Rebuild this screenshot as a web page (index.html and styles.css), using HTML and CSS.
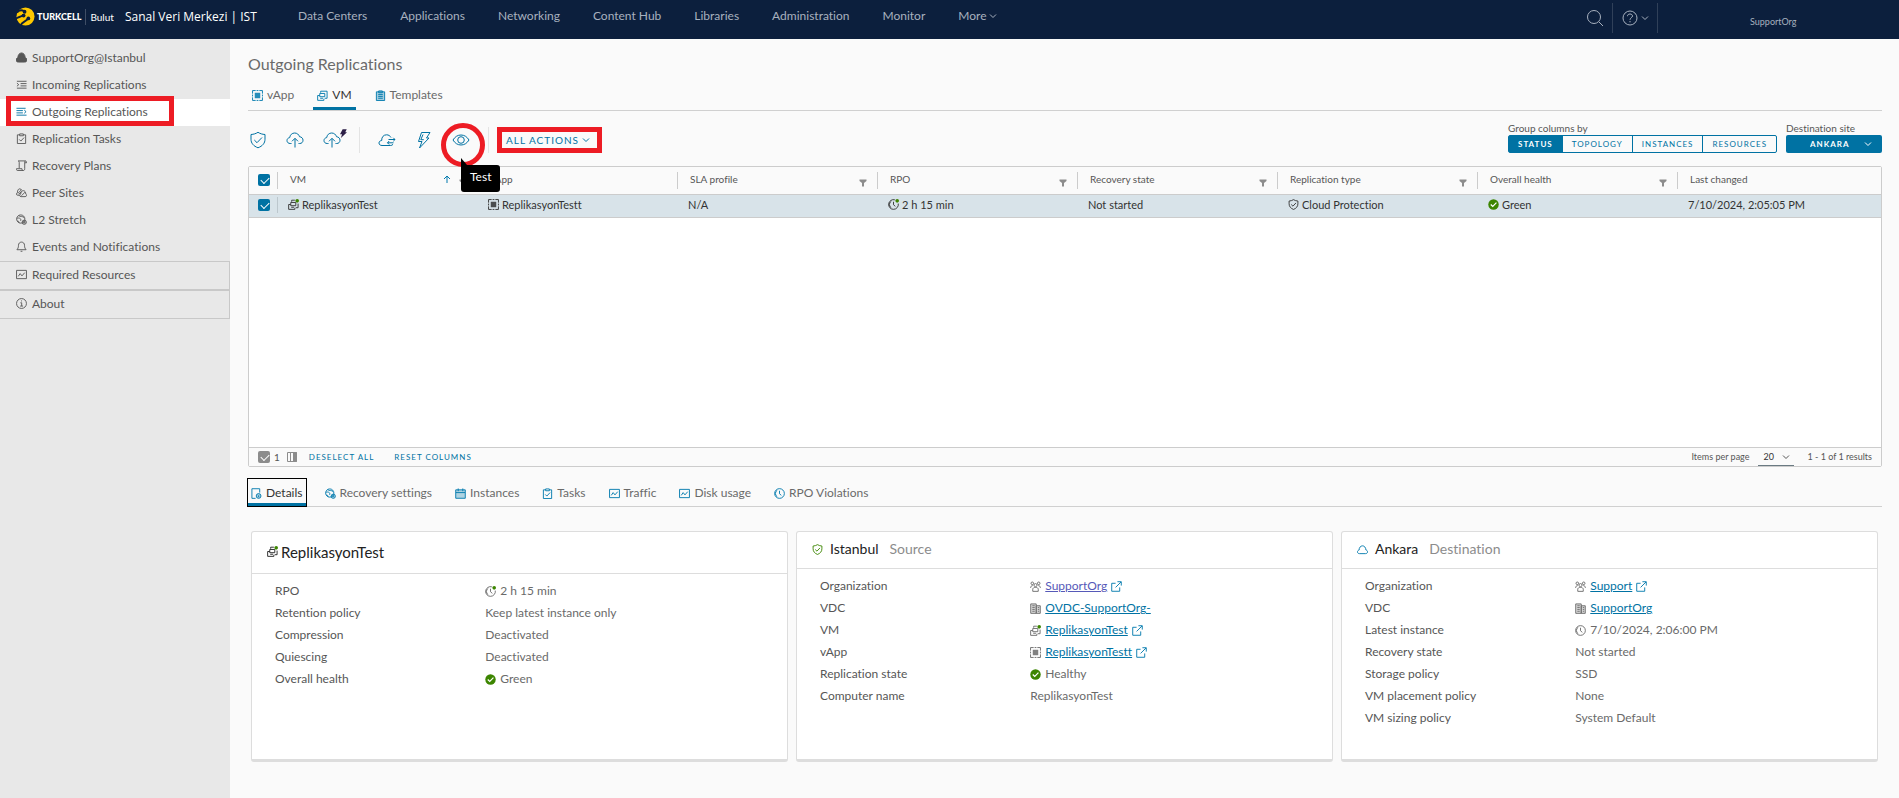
FILE: index.html
```html
<!DOCTYPE html>
<html lang="en">

<head>
    <meta charset="UTF-8">
    <meta name="viewport" content="width=device-width, initial-scale=1.0">
    <title>Outgoing Replications</title>
    <link rel="stylesheet" href="styles.css">
</head>

<body>
    <!-- Icon set, used below with <use> -->
    <svg class="icon-set" aria-hidden="true">
        <symbol id="i-cloud-solid" viewBox="0 0 12 12"><path d="M2.6 11C1 11 0 10 0 8.700c0-1.300.8-2 2-2.400C2 3.500 3.500 1 6 1s4 2.400 4 5.200c1.300.4 2 1.300 2 2.500C12 10 11 11 9.400 11z" fill="currentColor" /></symbol>
        <symbol id="i-cloud" viewBox="0 0 12 12"><path d="M2.800 10.500C1.400 10.500.5 9.800.5 8.600c0-1 .7-1.700 1.800-2C2.300 4 3.800 2 6 2s3.500 1.900 3.700 4.500c1.100.3 1.800 1 1.800 2.100 0 1.200-.9 1.900-2.300 1.900z" /></symbol>
        <symbol id="i-incoming" viewBox="0 0 12 12"><path d="M1 2.500h10.500M5 5h6.500M5 7.500h6.500M1 10h10.500M1 4.500l2 1.700-2 1.700" /></symbol>
        <symbol id="i-outgoing" viewBox="0 0 12 12"><path d="M.5 2.500h10M.5 5h7M.5 7.500h7M.5 10h11M9 4.500l2 1.700-2 1.700" /></symbol>
        <symbol id="i-tasks" viewBox="0 0 12 12"><path d="M4 2H1.500v9.500h9V2H8M4 1h4v2H4zM3.500 7l1.800 1.800L8.800 5" /></symbol>
        <symbol id="i-clip" viewBox="0 0 12 12"><path d="M1.500 2h9v9.500h-9z" fill="currentColor" fill-opacity=".35" /><path d="M4 1h4v2H4zM3.500 5h5M3.500 7h5M3.500 9h5" /></symbol>
        <symbol id="i-plan" viewBox="0 0 12 12"><path d="M3.500 9V2.500C3.500 1.500 3 1 2.500 1h7.700c.9 0 1.300.7 1.300 2h-2v6.500c0 1.300-.6 2-1.500 2H1.500c-.7 0-1-.8-1-2h6c0 1.300.5 2 1.500 2M9.500 3c0-1.300.3-2 .7-2" /></symbol>
        <symbol id="i-peers" viewBox="0 0 12 12"><path d="M5.500 10.500c-1 0-1.500-.6-1.500-1.400 0-.7.4-1.200 1.100-1.400C5.300 5.600 6.300 4 8 4s2.600 1.600 2.700 3.700c.5.2.8.7.8 1.400 0 .8-.6 1.400-1.500 1.400zM4 9H1.800C1 9 .5 8.400.5 7.600c0-.7.4-1.100 1-1.300C1.700 3.500 2.500 2 4 2c1 0 1.800.6 2.200 1.600M2 7l4-4M3 8l3-3M6 9.500l4-4" /></symbol>
        <symbol id="i-globe" viewBox="0 0 12 12"><circle cx="5.200" cy="5.500" r="4.500" /><path d="M1 4.500c3-.5 5 .5 4 3M3 1.800C5 3.500 7 2 9 4M1.500 7.500c1 0 2 1 2 2" /><circle cx="9" cy="9" r="2.300" fill="currentColor" fill-opacity=".3" /><circle cx="9" cy="9" r=".6" /></symbol>
        <symbol id="i-bell" viewBox="0 0 12 12"><path d="M6 1.200c2 0 3.300 1.500 3.300 3.500 0 2.500.6 3.500 1.700 4.800H1c1.100-1.300 1.700-2.300 1.700-4.800 0-2 1.300-3.500 3.300-3.500zM5 11.200h2" /></symbol>
        <symbol id="i-chart" viewBox="0 0 12 12"><path d="M.6 1.500h10.800v9H.6zM2.500 8l2-3 2 2.500L9.500 4" /></symbol>
        <symbol id="i-info" viewBox="0 0 12 12"><circle cx="6" cy="6" r="5.400" /><path d="M4.800 5.200h1.400v3.500M4.500 8.800h3.200M5.500 3.200h1" /></symbol>
        <symbol id="i-vapp" viewBox="0 0 12 12"><path d="M4 .6H.6V4M8 .6h3.400V4M4 11.400H.6V8M8 11.400h3.400V8" /><path d="M3 3h6v6H3z" fill="currentColor" stroke="none" opacity=".85" /><path d="M5 .6h2M5 11.400h2M.6 5v2M11.400 5v2" /></symbol>
        <symbol id="i-vm" viewBox="0 0 12 12"><path d="M4 3V1.300h7V9H8.500M3 3.800h5.500v3.500H3zM.7 6v5.300h6.800V9.500M.7 6H3M3.500 9h3" /></symbol>
        <symbol id="i-vm-on" viewBox="0 0 12 12"><path d="M4 3V1.300h3.500M11 5v4.500H8.500M3 3.800h5.500v3.500H3zM.7 6v5.300h6.800V9.500M.7 6H3M3.500 9h3" /><circle cx="10" cy="2" r="2" fill="#3c8500" stroke="none" /></symbol>
        <symbol id="i-clock" viewBox="0 0 12 12"><circle cx="6" cy="6" r="5.300" /><path d="M3.600 2.500a4 4 0 0 0 0 7M6 3v3.300l2 1.700" /></symbol>
        <symbol id="i-clock-on" viewBox="0 0 12 12"><path d="M7.500.9A5.300 5.300 0 1 0 11.200 5M3.600 2.500a4 4 0 0 0 0 7M6 3v3.300l2 1.700" /><circle cx="10" cy="2" r="2" fill="#3c8500" stroke="none" /></symbol>
        <symbol id="i-shield" viewBox="0 0 12 12"><path d="M6 .7c1.600 1 3 1.400 4.800 1.500v3c0 3-1.800 5-4.800 6.200C3 10.200 1.200 8.200 1.200 5.200v-3C3 2.100 4.400 1.700 6 .7zM3.500 6l1.900 1.800L8.700 4.300" /></symbol>
        <symbol id="i-ok" viewBox="0 0 12 12"><circle cx="6" cy="6" r="5.700" fill="#3c8500" stroke="none" /><path d="M3 6l2.200 2.200L9.200 4" stroke="#fff" stroke-width="1.300" /></symbol>
        <symbol id="i-org" viewBox="0 0 12 12"><circle cx="6" cy="4.500" r="1.700" /><circle cx="2.500" cy="2.500" r="1.400" /><circle cx="9.500" cy="2.500" r="1.400" /><path d="M3 11.300V9c0-1.300 1.300-2 3-2s3 .7 3 2v2.300zM.7 7.500c0-1.500.6-2.300 2.300-2.500M11.300 7.500c0-1.500-.6-2.300-2.300-2.500" /></symbol>
        <symbol id="i-building" viewBox="0 0 12 12"><path d="M.8 1h6v10.300h-6zM6.800 3h4.400v8.300H6.800z" fill="currentColor" fill-opacity=".25" /><path d="M2.500 3h2.700M2.500 5h2.700M2.500 7h2.700M2.500 9h2.700M8.500 5h1.500M8.500 7h1.500M8.500 9h1.500" /></symbol>
        <symbol id="i-popout" viewBox="0 0 12 12"><path d="M5 2.500H.8v8.700h8.700V7M7 .8h4.200V5M11 1L5 7" /></symbol>
        <symbol id="i-details" viewBox="0 0 12 12"><path d="M5 11.300H1V.8h8.500V5" /><circle cx="8.300" cy="8.700" r="2.600" fill="currentColor" fill-opacity=".35" /><path d="M8.300 8v2" /></symbol>
        <symbol id="i-calendar" viewBox="0 0 12 12"><path d="M.8 2h10.400v9.200H.8z" fill="currentColor" fill-opacity=".3" /><path d="M3.500.5v3M8.500.5v3M1 5h10" /></symbol>
        <symbol id="i-filter" viewBox="0 0 8 8"><path d="M.5.500h7v1.500L5 4v3.500H3V4L.5 2z" fill="currentColor" stroke="none" /></symbol>
        <symbol id="i-chevron" viewBox="0 0 8 8"><path d="M1 2.500l3 3 3-3" /></symbol>
        <symbol id="i-arrow-up" viewBox="0 0 8 8"><path d="M4 8V1M1 4l3-3 3 3" /></symbol>
        <symbol id="i-columns" viewBox="0 0 10 10"><path d="M.5.500h9v9h-9zM3.500.500v9" /><path d="M6.500.500h3v9h-3z" fill="currentColor" /></symbol>
        <symbol id="i-shield-large" viewBox="0 0 18 18"><path d="M9 1.300c2.200 1.400 4.300 2 7 2.200v4.700c0 4-2.400 6.800-7 8.600-4.600-1.800-7-4.600-7-8.600V3.500c2.700-.2 4.800-.8 7-2.200zM5.300 9l2.700 2.700 5-5.200" /></symbol>
        <symbol id="i-up-cloud" viewBox="0 0 18 18"><path d="M5.500 12.500H4.200C2.300 12.500 1 11.300 1 9.600c0-1.600 1-2.700 2.700-3C4 3.900 6 2 8.700 2c2.300 0 4.200 1.500 4.800 3.700 2 .2 3.500 1.500 3.500 3.500 0 2-1.300 3.300-3.300 3.300h-1.200" /><path d="M9 16.500V7.500M6 10.300l3-3 3 3" /></symbol>
        <symbol id="i-move-cloud" viewBox="0 0 18 18"><path d="M15 13.300c-.6.900-1.500 1.200-2.700 1.200H4C2.200 14.500 1 13.500 1 12c0-1.400 1-2.300 2.700-2.500-.2-3.300 1.800-5.700 4.800-5.700 2.200 0 3.600 1.100 4.500 2.700" /><path d="M10.500 8.500h6.500M15.300 6.800L17 8.500l-1.700 1.700M15.500 11.800H9.500M11.200 10L9.500 11.800l1.700 1.700" /></symbol>
        <symbol id="i-bolt" viewBox="0 0 18 18"><path d="M6.500 1.500h8.500L11.500 7H14L4.500 17 7 10.500H3.500z" /><path d="M8 3.500L5.800 8.700h3" /></symbol>
        <symbol id="i-bolt-solid" viewBox="0 0 8 10"><path d="M3 0h4.700L6 3.500h2L1 10l1.300-4.200H0z" fill="#2d1f47" stroke="none" /></symbol>
        <symbol id="i-eye" viewBox="0 0 18 18"><path d="M1 9c2-3.300 4.700-5 8-5s6 1.700 8 5c-2 3.300-4.700 5-8 5s-6-1.700-8-5z" /><circle cx="9" cy="9" r="3.300" /></symbol>
        <symbol id="i-search" viewBox="0 0 18 18"><circle cx="8" cy="8" r="6.500" /><path d="M12.800 12.800L17 17" /></symbol>
        <symbol id="i-help" viewBox="0 0 18 18"><circle cx="9" cy="9" r="7" /><path d="M6.500 7.200C6.500 5.700 7.500 5 9 5s2.500.8 2.500 2c0 1.700-2.500 1.800-2.500 3.800M9 12v1.300" /></symbol>
    </svg>

    <header class="header">
        <a class="brand" href="#">
            <svg class="brand-logo" viewBox="0 0 20 20" aria-hidden="true">
                <circle cx="10" cy="10" r="9.500" fill="#ffc900" />
                <path d="M-1 13C2 10 5 11 8 8M1 6c2-3 5-3 8-1.500M5 19c2-4 5-3 8-7" fill="none" stroke="#0c1f3d" stroke-width="2" />
                <circle cx="9" cy="5" r="2" fill="#0c1f3d" />
                <circle cx="8" cy="9" r="2" fill="#0c1f3d" />
                <circle cx="13" cy="12" r="2" fill="#0c1f3d" />
            </svg>
            <span class="brand-name">TURKCELL</span>
            <span class="brand-sub">Bulut</span>
            <span class="brand-title">Sanal Veri Merkezi | IST</span>
        </a>
        <nav class="header-nav">
            <a href="#">Data Centers</a>
            <a href="#">Applications</a>
            <a href="#">Networking</a>
            <a href="#">Content Hub</a>
            <a href="#">Libraries</a>
            <a href="#">Administration</a>
            <a href="#">Monitor</a>
            <a href="#">More<svg class="icon-chevron"><use href="#i-chevron" /></svg></a>
        </nav>
        <div class="header-actions">
            <button class="header-button" aria-label="Search"><svg class="icon-large"><use href="#i-search" /></svg></button>
            <button class="header-button" aria-label="Help"><svg class="icon-large"><use href="#i-help" /></svg><svg class="icon-chevron"><use href="#i-chevron" /></svg></button>
            <div class="header-user">SupportOrg</div>
        </div>
    </header>

    <div class="layout">
        <nav class="sidebar">
            <a href="#"><svg class="icon"><use href="#i-cloud-solid" /></svg>SupportOrg@Istanbul</a>
            <a href="#"><svg class="icon"><use href="#i-incoming" /></svg>Incoming Replications</a>
            <a href="#" class="active"><svg class="icon"><use href="#i-outgoing" /></svg>Outgoing Replications<span class="mark mark-side"></span></a>
            <a href="#"><svg class="icon"><use href="#i-tasks" /></svg>Replication Tasks</a>
            <a href="#"><svg class="icon"><use href="#i-plan" /></svg>Recovery Plans</a>
            <a href="#"><svg class="icon"><use href="#i-peers" /></svg>Peer Sites</a>
            <a href="#"><svg class="icon"><use href="#i-globe" /></svg>L2 Stretch</a>
            <a href="#"><svg class="icon"><use href="#i-bell" /></svg>Events and Notifications</a>
            <a href="#" class="boxed"><svg class="icon"><use href="#i-chart" /></svg>Required Resources</a>
            <a href="#" class="boxed"><svg class="icon"><use href="#i-info" /></svg>About</a>
        </nav>

        <main class="content">
            <h1>Outgoing Replications</h1>

            <div class="tabs">
                <button class="tab"><svg class="icon"><use href="#i-vapp" /></svg>vApp</button>
                <button class="tab active"><svg class="icon"><use href="#i-vm" /></svg>VM</button>
                <button class="tab"><svg class="icon"><use href="#i-clip" /></svg>Templates</button>
            </div>

            <div class="toolbar">
                <div class="toolbar-group">
                    <button class="tool" aria-label="Protect"><svg class="icon-large"><use href="#i-shield-large" /></svg></button>
                    <button class="tool" aria-label="Migrate"><svg class="icon-large"><use href="#i-up-cloud" /></svg></button>
                    <button class="tool" aria-label="Fast migrate"><svg class="icon-large"><use href="#i-up-cloud" /></svg><svg class="icon-badge"><use href="#i-bolt-solid" /></svg></button>
                </div>
                <div class="toolbar-group">
                    <button class="tool" aria-label="Failover settings"><svg class="icon-large"><use href="#i-move-cloud" /></svg></button>
                    <button class="tool" aria-label="Failover"><svg class="icon-large"><use href="#i-bolt" /></svg></button>
                    <button class="tool" aria-label="Test"><svg class="icon-large"><use href="#i-eye" /></svg><span class="mark mark-circle"></span><span class="tooltip">Test</span></button>
                </div>
                <button class="all-actions">ALL ACTIONS<svg class="icon-chevron"><use href="#i-chevron" /></svg></button>
                <div class="toolbar-right">
                    <div class="field">
                        <span class="field-label" id="group-label">Group columns by</span>
                        <div class="button-group" role="group" aria-labelledby="group-label">
                            <button class="active">STATUS</button>
                            <button>TOPOLOGY</button>
                            <button>INSTANCES</button>
                            <button>RESOURCES</button>
                        </div>
                    </div>
                    <div class="field">
                        <label class="field-label" for="site">Destination site</label>
                        <div class="site-select">
                            <select id="site"><option>ANKARA</option></select>
                            <svg class="icon-chevron"><use href="#i-chevron" /></svg>
                        </div>
                    </div>
                </div>
            </div>

            <div class="datagrid">
                <div class="datagrid-body">
                    <table>
                        <colgroup>
                            <col class="col-check">
                            <col class="col-data" span="7">
                            <col>
                        </colgroup>
                        <thead>
                            <tr>
                                <th><input type="checkbox" aria-label="Select all" checked></th>
                                <th><div class="cell">VM<svg class="icon-small sort"><use href="#i-arrow-up" /></svg><svg class="icon-small filter"><use href="#i-filter" /></svg></div></th>
                                <th><div class="cell">vApp</div></th>
                                <th><div class="cell">SLA profile<svg class="icon-small filter"><use href="#i-filter" /></svg></div></th>
                                <th><div class="cell">RPO<svg class="icon-small filter"><use href="#i-filter" /></svg></div></th>
                                <th><div class="cell">Recovery state<svg class="icon-small filter"><use href="#i-filter" /></svg></div></th>
                                <th><div class="cell">Replication type<svg class="icon-small filter"><use href="#i-filter" /></svg></div></th>
                                <th><div class="cell">Overall health<svg class="icon-small filter"><use href="#i-filter" /></svg></div></th>
                                <th><div class="cell">Last changed</div></th>
                            </tr>
                        </thead>
                        <tbody>
                            <tr>
                                <td><input type="checkbox" aria-label="Select ReplikasyonTest" checked></td>
                                <td class="first"><div class="value"><svg class="icon"><use href="#i-vm-on" /></svg>ReplikasyonTest</div></td>
                                <td><div class="value"><svg class="icon"><use href="#i-vapp" /></svg>ReplikasyonTestt</div></td>
                                <td>N/A</td>
                                <td><div class="value"><svg class="icon"><use href="#i-clock-on" /></svg>2 h 15 min</div></td>
                                <td>Not started</td>
                                <td><div class="value"><svg class="icon"><use href="#i-shield" /></svg>Cloud Protection</div></td>
                                <td><div class="value"><svg class="icon"><use href="#i-ok" /></svg>Green</div></td>
                                <td>7/10/2024, 2:05:05 PM</td>
                            </tr>
                        </tbody>
                    </table>
                </div>
                <div class="datagrid-footer">
                    <label class="selected-count"><input type="checkbox" checked disabled>1</label>
                    <button class="icon-button" aria-label="Columns"><svg class="icon-columns"><use href="#i-columns" /></svg></button>
                    <button class="link-button">DESELECT ALL</button>
                    <button class="link-button">RESET COLUMNS</button>
                    <div class="pagination">
                        <label for="page-size">Items per page</label>
                        <div class="page-size">
                            <select id="page-size"><option>20</option></select>
                            <svg class="icon-chevron"><use href="#i-chevron" /></svg>
                        </div>
                        <span>1 - 1 of 1 results</span>
                    </div>
                </div>
            </div>

            <div class="tabs detail-tabs">
                <button class="tab active focused"><svg class="icon"><use href="#i-details" /></svg>Details</button>
                <button class="tab"><svg class="icon"><use href="#i-globe" /></svg>Recovery settings</button>
                <button class="tab"><svg class="icon"><use href="#i-calendar" /></svg>Instances</button>
                <button class="tab"><svg class="icon"><use href="#i-tasks" /></svg>Tasks</button>
                <button class="tab"><svg class="icon"><use href="#i-chart" /></svg>Traffic</button>
                <button class="tab"><svg class="icon"><use href="#i-chart" /></svg>Disk usage</button>
                <button class="tab"><svg class="icon"><use href="#i-clock" /></svg>RPO Violations</button>
            </div>

            <div class="cards">
                <section class="card">
                    <h2 class="card-name"><svg class="icon"><use href="#i-vm-on" /></svg>ReplikasyonTest</h2>
                    <dl>
                        <dt>RPO</dt><dd><svg class="icon"><use href="#i-clock-on" /></svg>2 h 15 min</dd>
                        <dt>Retention policy</dt><dd>Keep latest instance only</dd>
                        <dt>Compression</dt><dd>Deactivated</dd>
                        <dt>Quiescing</dt><dd>Deactivated</dd>
                        <dt>Overall health</dt><dd><svg class="icon"><use href="#i-ok" /></svg>Green</dd>
                    </dl>
                </section>
                <section class="card">
                    <h2 class="card-site"><svg class="icon green"><use href="#i-shield" /></svg>Istanbul <small>Source</small></h2>
                    <dl>
                        <dt>Organization</dt><dd><svg class="icon"><use href="#i-org" /></svg><a class="visited" href="#">SupportOrg</a><svg class="icon popout"><use href="#i-popout" /></svg></dd>
                        <dt>VDC</dt><dd><svg class="icon"><use href="#i-building" /></svg><a href="#">OVDC-SupportOrg-</a></dd>
                        <dt>VM</dt><dd><svg class="icon"><use href="#i-vm-on" /></svg><a href="#">ReplikasyonTest</a><svg class="icon popout"><use href="#i-popout" /></svg></dd>
                        <dt>vApp</dt><dd><svg class="icon"><use href="#i-vapp" /></svg><a href="#">ReplikasyonTestt</a><svg class="icon popout"><use href="#i-popout" /></svg></dd>
                        <dt>Replication state</dt><dd><svg class="icon"><use href="#i-ok" /></svg>Healthy</dd>
                        <dt>Computer name</dt><dd>ReplikasyonTest</dd>
                    </dl>
                </section>
                <section class="card">
                    <h2 class="card-site"><svg class="icon blue"><use href="#i-cloud" /></svg>Ankara <small>Destination</small></h2>
                    <dl>
                        <dt>Organization</dt><dd><svg class="icon"><use href="#i-org" /></svg><a href="#">Support</a><svg class="icon popout"><use href="#i-popout" /></svg></dd>
                        <dt>VDC</dt><dd><svg class="icon"><use href="#i-building" /></svg><a href="#">SupportOrg</a></dd>
                        <dt>Latest instance</dt><dd><svg class="icon"><use href="#i-clock" /></svg>7/10/2024, 2:06:00 PM</dd>
                        <dt>Recovery state</dt><dd>Not started</dd>
                        <dt>Storage policy</dt><dd>SSD</dd>
                        <dt>VM placement policy</dt><dd>None</dd>
                        <dt>VM sizing policy</dt><dd>System Default</dd>
                    </dl>
                </section>
            </div>
        </main>
    </div>
</body>

</html>
```

FILE: styles.css
```css
* {
    box-sizing: border-box;
}

body {
    margin: 0;
    min-height: 100vh;
    display: flex;
    flex-direction: column;
    font-family: Lato, "Open Sans", sans-serif;
    font-size: 12px;
    line-height: 16px;
    font-variant-ligatures: none;
    color: #565656;
    background-color: #fafafa;
}

h1, h2, dl, dd {
    margin: 0;
    font-weight: normal;
}

a {
    color: #0072a3;
}

button, select {
    font: inherit;
    color: inherit;
    background: none;
    border: none;
    padding: 0;
    cursor: pointer;
}

select {
    appearance: none;
}

/* Icons */
svg {
    flex: none;
    fill: none;
    stroke: currentColor;
    stroke-width: 1;
}

.icon-set {
    position: absolute;
    width: 0;
    height: 0;
}

.icon {
    width: 11px;
    height: 11px;
}

.icon-large {
    width: 18px;
    height: 18px;
}

.icon-small, .icon-chevron {
    width: 8px;
    height: 8px;
}

.icon-columns {
    width: 10px;
    height: 10px;
}

/* Header */
.header {
    display: flex;
    height: 39px;
    padding-bottom: 12px;
    align-items: center;
    background-color: #0c1f3d;
    color: #a8b1bf;
}

.header a {
    color: inherit;
    text-decoration: none;
}

.header .brand {
    display: flex;
    align-items: center;
    width: 280px;
    padding-left: 16px;
    padding-top: 6px;
    color: #fff;
}

.brand-logo {
    width: 19px;
    height: 19px;
    stroke: none;
}

.brand-name {
    margin-left: 2px;
    font-size: 9px;
    font-weight: 900;
}

.brand-sub {
    margin-left: 4px;
    padding-left: 4px;
    border-left: 1px solid #3f4e66;
    font-size: 10px;
}

.brand-title {
    margin-left: 11px;
    font-family: "Open Sans", sans-serif;
    font-size: 12px;
}

.header-nav {
    display: flex;
    gap: 33px;
    padding-left: 18px;
    padding-top: 4px;
}

.header-nav svg {
    margin-left: 2px;
}

.header-actions {
    display: flex;
    margin-left: auto;
    padding-top: 8px;
}

.header-button {
    display: flex;
    align-items: center;
    gap: 2px;
    height: 30px;
    padding: 0 8px;
    border-right: 1px solid #304059;
}

.header-user {
    width: 241px;
    padding-left: 92px;
    padding-top: 11px;
    font-size: 9px;
}

/* Layout */
.layout {
    display: flex;
    flex: 1;
}

.sidebar {
    flex: none;
    width: 230px;
    padding-top: 6px;
    background-color: #e8e8e8;
}

.sidebar a {
    position: relative;
    display: flex;
    align-items: center;
    gap: 5px;
    height: 27px;
    padding-left: 16px;
    padding-bottom: 2px;
    color: #565656;
    text-decoration: none;
}

.sidebar a.active {
    background-color: #fff;
}

.sidebar a.active .icon {
    color: #0072a3;
}

.sidebar a.boxed {
    height: 29px;
    border: 1px solid #c8c8c8;
    border-left: none;
}

.content {
    flex: 1;
    min-width: 0;
    padding: 14px 17px 0 18px;
}

h1 {
    font-size: 16px;
    line-height: 22px;
    color: #6a6a6a;
}

/* Red marks over the controls */
.mark {
    position: absolute;
    border: 5px solid #ed1c24;
    pointer-events: none;
}

.mark-side {
    top: -3px;
    left: 6px;
    width: 168px;
    height: 30px;
}

.mark-circle {
    top: -7px;
    left: -10px;
    width: 44px;
    height: 44px;
    border-radius: 50%;
}

.tooltip {
    position: absolute;
    top: 35px;
    left: 10px;
    z-index: 1;
    padding: 4px 9px 7px;
    border-radius: 0 3px 3px 3px;
    background-color: #000;
    color: #fff;
}

/* mouse pointer tip above the tooltip */
.tooltip::before {
    content: "";
    position: absolute;
    top: -7px;
    left: 0;
    border-top: 7px solid transparent;
    border-left: 6px solid #000;
}

/* Tabs */
.tabs {
    display: flex;
    gap: 15px;
    height: 28px;
    margin-top: 8px;
    border-bottom: 1px solid #d0d0d0;
}

.tab {
    display: flex;
    align-items: center;
    gap: 4px;
    padding: 0 4px;
    color: #6a6a6a;
    border-bottom: 3px solid transparent;
}

.tab .icon {
    color: #0079ad;
}

.tab.active {
    color: #333;
    border-bottom-color: #0072a3;
}

.tab.focused {
    padding: 0 3px;
    outline: 1px solid #000;
}

/* Toolbar */
.toolbar {
    display: flex;
    height: 55px;
    padding-top: 16px;
    align-items: flex-start;
    color: #0072a3;
}

.toolbar-group {
    display: flex;
    gap: 17px;
    height: 26px;
    padding: 0 17px;
    align-items: center;
    border-right: 1px solid #e4e4e4;
}

.toolbar-group:first-child {
    padding-left: 0;
}

.tool {
    position: relative;
    display: flex;
    width: 20px;
    height: 20px;
    align-items: center;
    justify-content: center;
}

.icon-badge {
    position: absolute;
    top: -1px;
    right: -5px;
    width: 7px;
    height: 9px;
}

.all-actions {
    display: flex;
    align-items: center;
    gap: 3px;
    height: 26px;
    margin-left: 8px;
    padding: 0 7px 0 4px;
    border: 5px solid #ed1c24;
    font-size: 10px;
    letter-spacing: 1px;
}

.toolbar-right {
    display: flex;
    gap: 9px;
    margin-top: -6px;
    margin-left: auto;
}

.field {
    display: flex;
    flex-direction: column;
}

.field-label {
    font-size: 10px;
    line-height: 14px;
    color: #565656;
}

.button-group {
    display: flex;
    height: 18px;
    border: 1px solid #0072a3;
    border-radius: 2px;
}

.button-group button {
    padding: 0 9px;
    font-size: 8px;
    letter-spacing: 1px;
    line-height: 16px;
}

.button-group button + button {
    border-left: 1px solid #0072a3;
}

.button-group .active {
    background-color: #0072a3;
    color: #fff;
    font-weight: bold;
}

.site-select {
    display: flex;
    align-items: center;
    width: 96px;
    height: 18px;
    border-radius: 2px;
    background-color: #0072a3;
    color: #fff;
}

.site-select select {
    flex: 1;
    padding-left: 24px;
    font-size: 8px;
    font-weight: bold;
    letter-spacing: 1px;
}

.site-select svg {
    margin-left: -18px;
    margin-right: 10px;
    pointer-events: none;
}

/* Data grid */
.datagrid {
    border: 1px solid #ccc;
    border-radius: 2px;
    background-color: #fff;
}

.datagrid-body {
    min-height: 280px;
}

table {
    width: 100%;
    table-layout: fixed;
    border-collapse: collapse;
}

.col-check {
    width: 28px;
}

.col-data {
    width: 200px;
}

th, td {
    padding: 0 0 0 11px;
    text-align: left;
    font-weight: normal;
    border-bottom: 1px solid #ccc;
}

th {
    height: 27px;
    padding: 0;
    font-size: 10px;
    background-color: #fafafa;
}

td {
    height: 23px;
    padding-bottom: 2px;
    font-size: 11px;
    color: #333;
    background-color: #d8e3e9;
}

th:first-child, td:first-child {
    padding-left: 9px;
}

.cell {
    display: flex;
    align-items: center;
    gap: 8px;
    height: 17px;
    padding: 0 10px 2px 12px;
    border-left: 1px solid #ccc;
}

.cell .filter {
    align-self: flex-end;
    margin-left: auto;
    color: #8c8c8c;
}

.cell .sort {
    margin-left: auto;
    color: #0079ad;
}

.cell .sort + .filter {
    margin-left: 0;
}

.value {
    display: flex;
    align-items: center;
    gap: 3px;
}

td.first .value {
    margin-left: -11px;
    padding-left: 10px;
    border-left: 1px solid #bcc7cd;
}

input[type="checkbox"] {
    display: block;
    appearance: none;
    width: 12px;
    height: 12px;
    margin: 0;
    border-radius: 2px;
    background-color: #0072a3;
}

input[type="checkbox"]::after {
    content: "";
    display: block;
    width: 7px;
    height: 4px;
    margin: 3px 0 0 3px;
    border-left: 1px solid #fff;
    border-bottom: 1px solid #fff;
    transform: rotate(-45deg);
}

input[type="checkbox"]:disabled {
    background-color: #8c8c8c;
}

.datagrid-footer {
    display: flex;
    align-items: center;
    height: 19px;
    padding: 0 9px;
    border-top: 1px solid #ccc;
    background-color: #fafafa;
    font-size: 9px;
}

.selected-count {
    display: flex;
    align-items: center;
    gap: 4px;
    font-size: 10px;
}

.icon-button {
    display: flex;
    margin-left: 7px;
    color: #8c8c8c;
}

.link-button {
    margin-left: 12px;
    font-size: 8px;
    letter-spacing: 1px;
    color: #0072a3;
}

.link-button + .link-button {
    margin-left: 20px;
}

.pagination {
    display: flex;
    align-items: center;
    margin-left: auto;
}

.page-size {
    display: flex;
    align-items: center;
    width: 36px;
    height: 18px;
    margin: 0 13px 0 9px;
    border-bottom: 1px solid #6a7a82;
}

.page-size select {
    flex: 1;
    padding-left: 5px;
    color: #333;
}

.page-size svg {
    margin-left: -12px;
    margin-right: 4px;
    pointer-events: none;
}

/* Detail cards */
.detail-tabs {
    margin-top: 12px;
}

.detail-tabs .tab {
    padding-top: 4px;
}

.cards {
    display: grid;
    grid-template-columns: repeat(3, 1fr);
    gap: 8px;
    min-height: 231px;
    margin-top: 24px;
    padding: 0 4px 0 3px;
}

.card {
    border: 1px solid #ddd;
    border-bottom-width: 3px;
    border-radius: 3px;
    background-color: #fff;
}

.card h2 {
    display: flex;
    align-items: center;
    height: 37px;
    padding: 0 15px 2px;
    border-bottom: 1px solid #ddd;
    font-size: 14px;
    color: #222;
}

.card h2.card-name {
    height: 42px;
    gap: 3px;
    font-size: 15px;
}

.card h2.card-site {
    gap: 7px;
}

.card small {
    margin-left: 4px;
    font-size: 14px;
    color: #8c8c8c;
}

.card dl {
    display: grid;
    grid-template-columns: 43% 1fr;
    grid-auto-rows: 22px;
    align-items: center;
    padding: 6px 23px;
}

.card dd {
    display: flex;
    align-items: center;
    gap: 4px;
    color: #6a6a6a;
}

.card .green {
    color: #3c8500;
}

.card .blue, .card .popout {
    color: #0079ad;
}

.card .visited {
    color: #5659b8;
}
```
